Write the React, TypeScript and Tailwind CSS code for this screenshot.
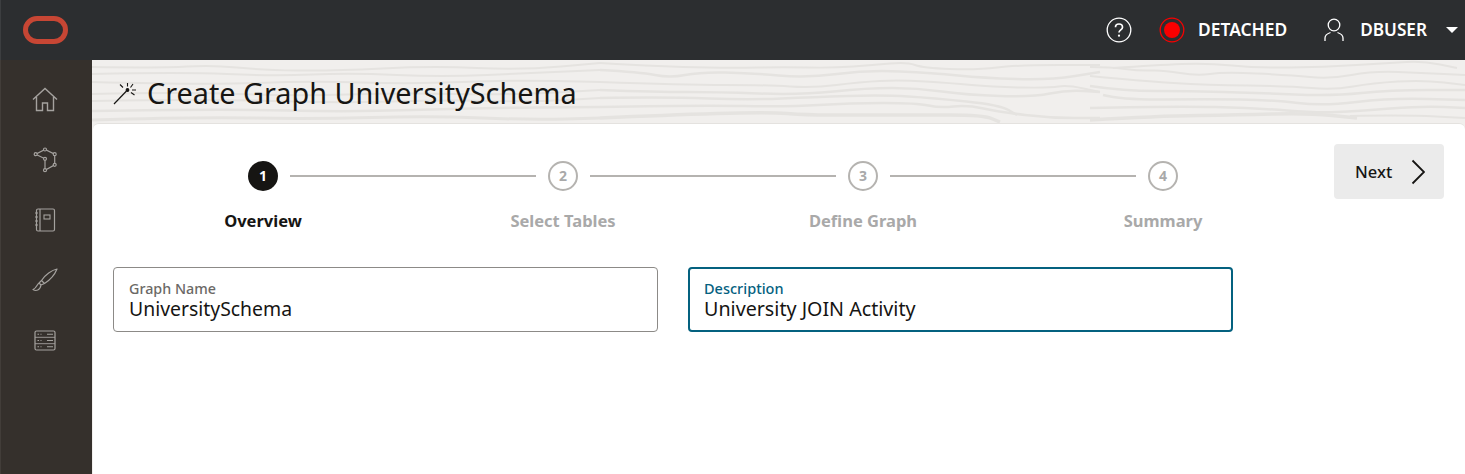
import React from "react"

const font = "font-['Noto_Sans',sans-serif]"

// grain lines of the banner, points relative to the banner (1373x63, x starts at 92)
const grain: { w: number; xs: number[]; ys: number[] }[] = [
	{ w: 2, xs: [0, 70, 120, 170, 240, 340, 430, 508], ys: [7, 8, 5, 10, 11, 6, 10, 3] },
	{ w: 2, xs: [0, 90, 180, 260, 350, 440, 508], ys: [14, 12, 16, 13, 17, 13, 10] },
	{ w: 2, xs: [0, 110, 220, 320, 420, 508], ys: [22, 25, 21, 24, 20, 22] },
	{ w: 2, xs: [0, 90, 200, 310, 420, 508], ys: [34, 32, 36, 33, 35, 30] },
	{ w: 2, xs: [0, 120, 240, 360, 440, 508], ys: [41, 39, 43, 40, 42, 38] },
	{ w: 2.5, xs: [0, 130, 260, 380, 508], ys: [51, 49, 52, 48, 47] },
	{ w: 3, xs: [0, 100, 220, 340, 440, 508], ys: [60, 57, 59, 56, 60, 58] },
	{ w: 2, xs: [508, 541, 591, 641, 691, 741, 781, 815, 831, 885, 925, 1008], ys: [3, 5, 7, 8, 7, 8, 5, 2, 8, 10, 5, 5] },
	{ w: 2.5, xs: [508, 548, 578, 608, 658, 715, 775, 841, 891, 958, 1008], ys: [10, 12, 18, 12, 13, 18, 10, 13, 18, 20, 12] },
	{ w: 2, xs: [508, 591, 675, 721, 768, 808, 858, 901, 958, 975, 1008], ys: [22, 25, 25, 28, 22, 20, 23, 27, 28, 25, 32] },
	{ w: 2.5, xs: [508, 565, 625, 708, 775, 825, 875, 941, 975, 1008], ys: [30, 32, 32, 35, 28, 28, 35, 37, 30, 32] },
	{ w: 2.5, xs: [508, 575, 658, 721, 791, 841, 908, 925], ys: [38, 37, 40, 37, 35, 38, 45, 55] },
	{ w: 2.5, xs: [508, 608, 695, 758, 825, 848, 875, 908, 958, 1008], ys: [47, 45, 47, 43, 43, 48, 45, 52, 58, 58] },
	{ w: 3.5, xs: [508, 575, 675, 715, 761, 825, 891, 908], ys: [58, 55, 52, 55, 55, 55, 55, 62] },
	{ w: 2, xs: [998, 1018, 1048, 1071, 1105, 1131, 1198, 1238, 1281, 1331, 1373], ys: [7, 7, 11, 10, 16, 12, 15, 19, 11, 13, 15] },
	{ w: 2, xs: [1021, 1065, 1115, 1165, 1231, 1298, 1331, 1365], ys: [8, 5, 3, 8, 7, 3, 1, 8] },
	{ w: 2, xs: [998, 1048, 1115, 1198, 1241, 1281, 1331, 1373], ys: [16, 21, 25, 26, 30, 23, 20, 25] },
	{ w: 2.5, xs: [998, 1031, 1098, 1165, 1241, 1298, 1373], ys: [26, 31, 31, 33, 36, 30, 30] },
	{ w: 2.5, xs: [1011, 1031, 1115, 1181, 1231, 1298, 1373], ys: [35, 40, 39, 40, 46, 38, 40] },
	{ w: 2.5, xs: [998, 1081, 1165, 1225, 1265, 1331, 1373], ys: [48, 46, 48, 53, 51, 46, 48] },
	{ w: 3.5, xs: [998, 1065, 1148, 1215, 1265], ys: [60, 56, 55, 53, 58] },
	{ w: 2, xs: [1258, 1315, 1373], ys: [56, 55, 58] },
]

// smooth line through the points, using midpoints
const toPath = (xs: number[], ys: number[]) => {
	let d = `M${xs[0]} ${ys[0]}`
	for (let i = 1; i < xs.length - 1; i++) {
		d += ` Q${xs[i]} ${ys[i]} ${(xs[i] + xs[i + 1]) / 2} ${(ys[i] + ys[i + 1]) / 2}`
	}
	return d + ` L${xs[xs.length - 1]} ${ys[ys.length - 1]}`
}

const Logo = () => (
	<svg width="45" height="28" viewBox="0 0 45 28" fill="none">
		<rect x="2.500" y="2.500" width="40" height="23" rx="11.500" stroke="#c74634" strokeWidth="5" />
	</svg>
)

const NavHome = () => (
	<svg width="26" height="26" viewBox="0 0 26 26" fill="none" stroke="#a5a29f" strokeWidth="1.400">
		<path d="M1 12.500 13 1.500l12 11M4.500 10v13.500h6V16h5v7.500h6V10" />
	</svg>
)

const NavGraph = () => (
	<svg width="26" height="30" viewBox="0 0 26 30" fill="none" stroke="#a5a29f" strokeWidth="1.200">
		<path d="M3.700 9.200 13 4.500l9.700 4.700v10.600L13 25.200V13.800L3.700 9.200Z" />
		<circle cx="3.700" cy="9.200" r="1.500" fill="#35302c" />
		<circle cx="13" cy="4.500" r="1.500" fill="#35302c" />
		<circle cx="22.700" cy="9.200" r="1.500" fill="#35302c" />
		<circle cx="22.700" cy="19.800" r="1.500" fill="#35302c" />
		<circle cx="13" cy="25.200" r="1.500" fill="#35302c" />
		<circle cx="13" cy="13.800" r="1.500" fill="#35302c" />
	</svg>
)

const NavBook = () => (
	<svg width="22" height="24" viewBox="0 0 22 24" fill="none" stroke="#a5a29f" strokeWidth="1.200">
		<rect x="2.500" y="1" width="18" height="22" rx="1.500" />
		<path d="M6 1v22" />
		<rect x="10" y="7" width="6" height="4" strokeWidth="1.100" />
		<path d="M1 5h3M1 9h3M1 13h3M1 17h3" />
	</svg>
)

const NavBrush = () => (
	<svg width="26" height="24" viewBox="0 0 26 24" fill="none" stroke="#a5a29f" strokeWidth="1.200" strokeLinejoin="round">
		<path d="M25 1C20 2 13 7 9.500 12.500L12.500 15.500C18 12 23 6 25 1Z" />
		<path d="M9.500 12.500 7 15l2 2 3.500-1.500M7 15c-2 1-2 5-6 6.500 3 2 7 1 8-4.500" />
	</svg>
)

const NavList = () => (
	<svg width="22" height="21" viewBox="0 0 22 21" fill="none" stroke="#a5a29f" strokeWidth="1.200">
		<rect x="1" y="1" width="20" height="19" rx="1.500" />
		<path d="M1 7.300h20M1 13.700h20" strokeWidth="0.900" />
		<path d="M3.500 4.200h1.500M6.500 4.200h1M13 4.200h6M3.500 10.500h1.500M6.500 10.500h1M13 10.500h6M3.500 16.800h1.500M6.500 16.800h1M13 16.800h6" strokeWidth="1.100" />
	</svg>
)

const Wand = () => (
	<svg width="24" height="24" viewBox="0 0 24 24" fill="none" stroke="#161513" strokeWidth="1.200">
		<path d="M1 23 13.500 10" />
		<path d="M14.500 2v3.500M20 3l-2.500 3.500M19 9h4M18 11.500l3.500 2.500M7 3.500l3 3" strokeWidth="1.100" />
		<circle cx="14.500" cy="9" r="1.300" fill="#161513" />
	</svg>
)

const Help = () => (
	<svg width="26" height="26" viewBox="0 0 26 26" fill="none" stroke="#fff">
		<circle cx="13" cy="13" r="11.800" strokeWidth="1.300" />
		<path d="M9.500 10.300c0-2 1.600-3.300 3.500-3.300s3.500 1.300 3.500 3.200c0 2.600-3.500 2.700-3.500 5.300" strokeWidth="1.700" />
		<circle cx="13" cy="18.700" r="1.100" fill="#fff" stroke="none" />
	</svg>
)

const Status = () => (
	<svg width="26" height="26" viewBox="0 0 26 26" fill="none">
		<circle cx="13" cy="13" r="11.800" stroke="#f80000" strokeWidth="1.300" />
		<circle cx="13" cy="13" r="8" fill="#f80000" />
	</svg>
)

const User = () => (
	<svg width="20" height="24" viewBox="0 0 20 24" fill="none" stroke="#fff" strokeWidth="1.300">
		<circle cx="10" cy="7" r="5.800" />
		<path d="M1 23v-3c0-3 2.500-4.500 5.500-5.500M19 23v-3c0-3-2.500-4.500-5.500-5.500" />
	</svg>
)

const Chevron = () => (
	<svg width="14" height="26" viewBox="0 0 14 26" fill="none" stroke="#161513" strokeWidth="1.800">
		<path d="M1.500 1.500 13 13 1.500 24.500" />
	</svg>
)

const steps = ["Overview", "Select Tables", "Define Graph", "Summary"]

const Field = ({ label, value, active }: { label: string; value: string; active?: boolean }) => (
	<div className={active ? "h-[65px] rounded border-2 border-[#04617f] px-[14px] pt-[11px]" : "h-[65px] rounded border border-[#8c8a87] px-[15px] pt-3"}>
		<div className={active ? "text-[14.500px] leading-[17px] font-medium text-[#04617f]" : "text-[14.300px] leading-[17px] font-medium text-[#6b6966]"}>{label}</div>
		<div className={active ? "text-[19.700px] leading-[24px] text-[#161513]" : "text-[19.400px] leading-[24px] text-[#161513]"}>{value}</div>
	</div>
)

const App = () => {
	return (
		<div className={`${font} flex h-[474px] w-[1465px] flex-col overflow-hidden bg-white`}>
			<header className="flex h-[60px] shrink-0 items-center justify-between border-l border-[#3c3e40] bg-[#2c2e30] pr-[7px] pl-[22px] text-white">
				<Logo />
				<div className="flex items-center">
					<Help />
					<div className="ml-[27px]"><Status /></div>
					<span className="ml-[13px] text-[17.400px] leading-none font-semibold">DETACHED</span>
					<div className="ml-[37px]"><User /></div>
					<span className="ml-[16px] text-[17.200px] leading-none font-semibold">DBUSER</span>
					<span className="ml-[19px] h-0 w-0 border-x-[6px] border-t-[6px] border-x-transparent border-t-white" />
				</div>
			</header>
			<div className="flex flex-1">
				<nav className="flex w-[92px] shrink-0 flex-col items-center gap-[34px] border-l border-[#423d39] bg-[#35302c] pt-[27px] pr-[3px]">
					<div className="flex h-[26px] items-center"><NavHome /></div>
					<div className="flex h-[26px] items-center"><NavGraph /></div>
					<div className="flex h-[26px] items-center"><NavBook /></div>
					<div className="flex h-[26px] items-center"><NavBrush /></div>
					<div className="flex h-[26px] items-center"><NavList /></div>
				</nav>
				<main className="flex flex-1 flex-col bg-[#f1efed]">
					<div className="relative flex h-[63px] shrink-0 items-center pt-1 pl-[21px]">
						<svg className="absolute inset-0" width="1373" height="63" viewBox="0 0 1373 63" fill="none" stroke="#e5e3e0">
							{grain.map((g, i) => (
								<path key={i} d={toPath(g.xs, g.ys)} strokeWidth={g.w} />
							))}
						</svg>
						<div className="relative flex items-center gap-[10px]">
							<Wand />
							<h1 className="text-[28.800px] leading-none font-normal text-[#161513]">Create Graph UniversitySchema</h1>
						</div>
					</div>
					<div className="ml-px flex-1 rounded-t-md border-t border-[#e4e2df] bg-white pt-5 pl-5">
						<div className="flex items-start">
							<div className="w-[1200px]">
								<div className="flex items-center px-[135px] pt-[17px]">
									{steps.map((s, i) => (
										<React.Fragment key={s}>
											{i > 0 && <div className="mx-3 h-0.5 flex-1 bg-[#b5b3b0]" />}
											<div className={i === 0 ? "flex h-[30px] w-[30px] items-center justify-center rounded-full bg-[#161513] text-sm font-bold text-white" : "flex h-[30px] w-[30px] items-center justify-center rounded-full border-2 border-[#b5b3b0] text-sm font-bold text-[#a9a9a9]"}>
												{i + 1}
											</div>
										</React.Fragment>
									))}
								</div>
								<div className="mt-[19px] grid grid-cols-4 text-center">
									{steps.map((s, i) => (
										<div key={s} className={i === 0 ? "text-[16.500px] leading-[22px] font-bold text-[#161513]" : "text-[16.500px] leading-[22px] font-bold text-[#a9a9a9]"}>
											{s}
										</div>
									))}
								</div>
							</div>
							<button className="ml-[21px] flex h-[55px] w-[110px] items-center gap-[19px] rounded bg-[#ebebeb] pl-[21px] text-[16.500px] font-medium text-[#161513]">
								<span className="pt-px">Next</span>
								<Chevron />
							</button>
						</div>
						<div className="mt-[35px] grid w-[1120px] grid-cols-2 gap-[30px]">
							<Field label="Graph Name" value="UniversitySchema" />
							<Field label="Description" value="University JOIN Activity" active />
						</div>
					</div>
				</main>
			</div>
		</div>
	)
}

export default App
